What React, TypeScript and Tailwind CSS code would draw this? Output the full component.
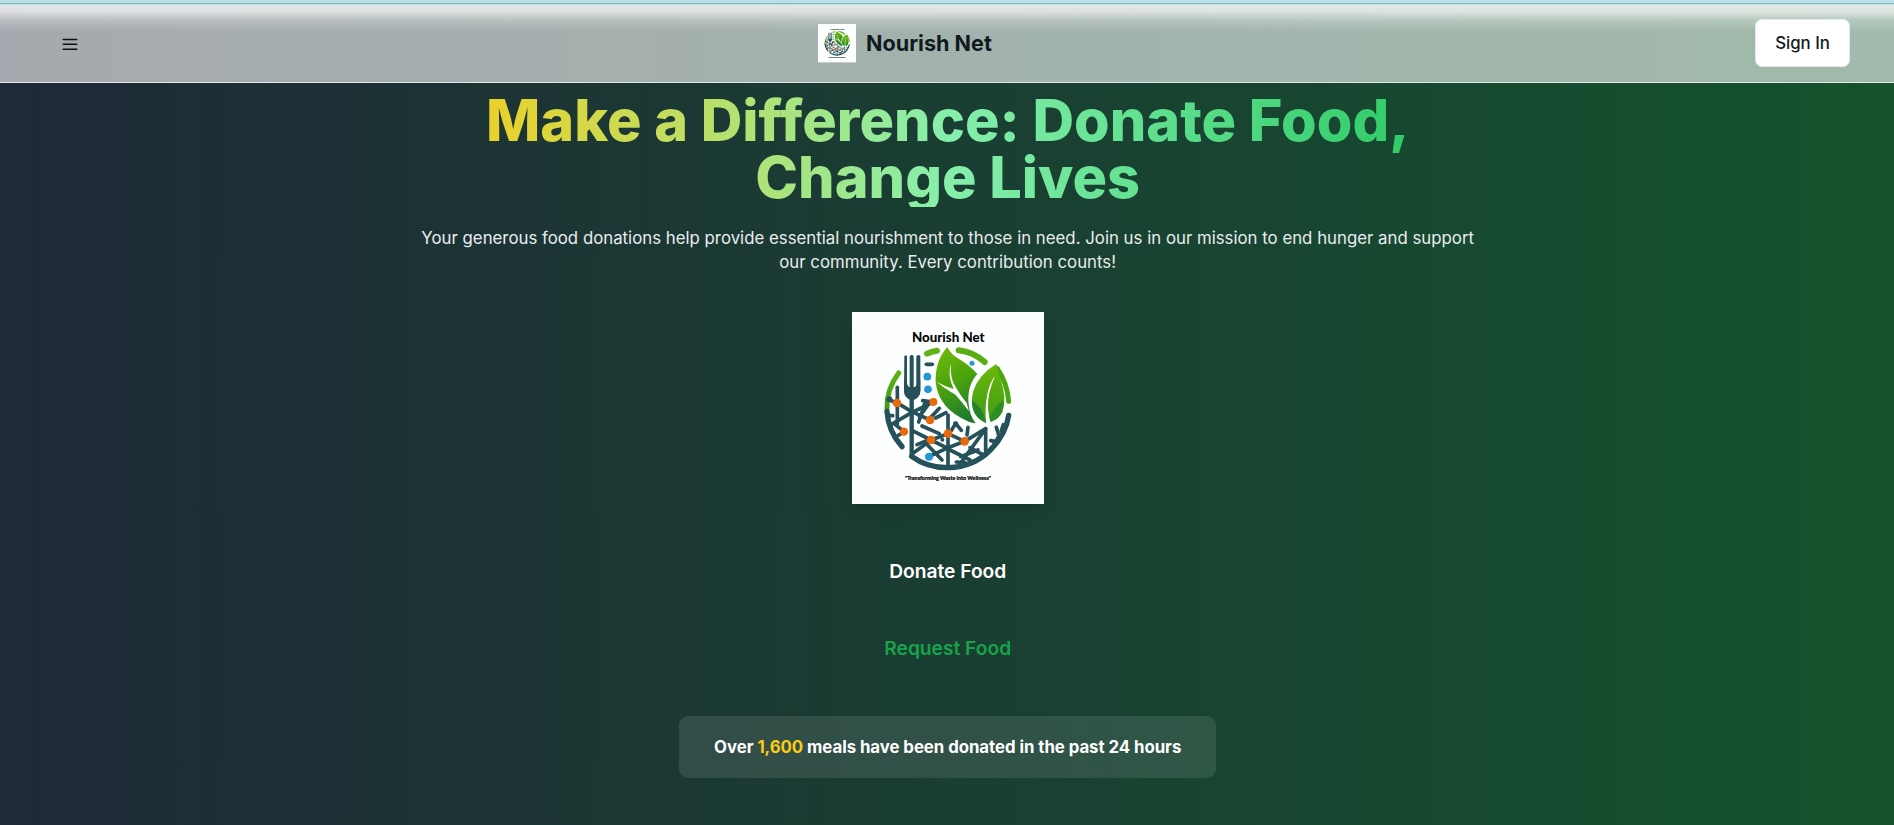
import React from "react";

function Logo({ className }: { className: string }) {
  return (
    <svg viewBox="36 36 576 576" className={className} role="img" aria-label="Nourish Net">
      <defs>
        <linearGradient id="leafA" x1="0.3" y1="0" x2="0.6" y2="1">
          <stop offset="0" stopColor="#6cb90a" />
          <stop offset="0.45" stopColor="#4ba40c" />
          <stop offset="1" stopColor="#1d7a2f" />
        </linearGradient>
        <linearGradient id="leafB" x1="0.5" y1="0" x2="0.5" y2="1">
          <stop offset="0" stopColor="#6cb80a" />
          <stop offset="1" stopColor="#3d9b14" />
        </linearGradient>
        <linearGradient id="arcL" x1="0" y1="0" x2="0" y2="1">
          <stop offset="0" stopColor="#5cb30e" />
          <stop offset="1" stopColor="#3f9a1d" />
        </linearGradient>
      </defs>
      <rect x="36" y="36" width="576" height="576" fill="#fdfefe" />
      <text x="325" y="125" textAnchor="middle" textLength="218" lengthAdjust="spacingAndGlyphs" fill="#050505" className="font-['Lato',sans-serif] text-[39px] font-black">
        Nourish Net
      </text>
      <text x="324" y="539" textAnchor="middle" textLength="258" lengthAdjust="spacingAndGlyphs" fill="#050505" stroke="#050505" strokeWidth="0.6" className="font-['Lato',sans-serif] text-[16px] font-black">
        "Transforming Waste into Wellness"
      </text>

      <g fill="none" strokeLinecap="round" strokeWidth="15">
        <path d="M176 219Q139 268 141 326" stroke="url(#arcL)" />
        <path d="M261 161Q275 154 291 152" stroke="#5fb414" strokeWidth="18" />
        <path d="M356 151Q400 156 434 186" stroke="#57ad12" strokeWidth="18" />
        <path d="M472 206Q502 250 506 304" stroke="#4aa511" />
      </g>

      <g fill="none" stroke="#25525a" strokeLinecap="round" strokeLinejoin="round" strokeWidth="11">
        <path d="M141 334Q145 395 186 440" strokeWidth="16" />
        <path d="M215 469Q262 504 325 503Q402 501 453 448Q498 402 506 346" strokeWidth="16" />
        <path d="M215 290V469" strokeWidth="13" strokeLinecap="butt" />
        <path d="M172 262V371" />
        <path d="M148 300L170 308L215 335L270 360" />
        <path d="M145 347H158" />
        <path d="M153 374L215 338L280 306" />
        <path d="M165 373L192 395L166 412" />
        <path d="M248 302L280 306M256 304L248 330L236 366" />
        <path d="M270 355L298 325M287 354L318 338M262 318L238 350" />
        <path d="M246 378L298 401" />
        <path d="M324 345V500" />
        <path d="M217 392L273 420L325 446" />
        <path d="M219 460L273 420L324 401" />
        <path d="M231 434L265 420M256 428L306 480" />
        <path d="M267 470L324 443L374 424" />
        <path d="M324 401L374 424" />
        <path d="M324 447L390 480" />
        <path d="M347 370L334 392M347 370L364 391" />
        <path d="M384 382L381 405" />
        <path d="M374 424L437 386V458" />
        <path d="M437 386L362 489" />
        <path d="M349 486L375 488M390 443L434 467M362 470L414 450" />
        <path d="M469 382L477 408M477 408L462 432M452 422L470 425M490 374L484 392" />
        <path d="M259 193H277" />
      </g>

      <path d="M193 169Q197 163 201 169V252Q201 262 209 262V169Q216 161 221 169V262Q229 262 229 252V169Q236 161 241 169V272Q241 290 222 300H210Q192 290 192 272Z" fill="#25525a" />
      <path d="M193 240V274Q194 297 216 299Q240 296 241 273V240L230 255Q228 264 216 264Q205 264 203 255Z" fill="#25525a" />

      <path d="M322 141Q285 181 287 247Q296 328 386 365Q396 369 407 370Q389 347 386 313Q380 258 412 222Q388 195 357 177Q332 163 322 141Z" fill="url(#leafA)" />
      <path d="M469 191Q415 226 401 270Q381 333 437 369Q473 364 487 337Q502 296 481 235Q473 214 469 191Z" fill="url(#leafB)" />
      <path d="M396 302Q426 317 438 369Q394 350 396 302Z" fill="#22852c" />
      <path d="M490 302Q459 316 446 367Q492 357 490 302Z" fill="#2d8d25" />
      <path d="M333 191Q329 232 347 262Q361 286 380 309L387 334Q366 306 345 283Q320 269 289 245Q315 259 341 267Q321 224 333 191Z" fill="#fdfefe" />
      <path d="M465 228Q442 280 444 323Q446 353 454 375H439Q433 326 442 283Q449 247 465 228Z" fill="#fdfefe" />

      <g fill="#2196d8">
        <circle cx="262" cy="230" r="11.5" />
        <circle cx="264" cy="268" r="11.5" />
        <circle cx="396" cy="190" r="7.5" />
        <circle cx="267" cy="470" r="12" />
      </g>
      <g fill="#25525a">
        <circle cx="148" cy="298" r="9" />
        <circle cx="307" cy="419" r="6" />
        <circle cx="347" cy="372" r="8" />
      </g>
      <g fill="#e8690b">
        <circle cx="171" cy="309" r="13" />
        <circle cx="280" cy="306" r="12" />
        <circle cx="270" cy="360" r="13" />
        <circle cx="192" cy="395" r="12.5" />
        <circle cx="324" cy="401" r="13" />
        <circle cx="273" cy="420" r="13" />
        <circle cx="374" cy="424" r="13" />
      </g>
    </svg>
  );
}

function MenuIcon() {
  return (
    <svg viewBox="0 0 18 18" className="size-[18px]" fill="none" stroke="#0b1215" strokeWidth="1.4" strokeLinecap="round">
      <path d="M2.2 4.5H15.8M2.2 9.3H15.8M2.2 14.2H15.8" />
    </svg>
  );
}

function Header() {
  return (
    <header className="flex h-[78px] items-center border-b border-[#e2e8e8] bg-[linear-gradient(to_bottom,rgba(255,255,255,0.72)_0px,rgba(255,255,255,0.6)_7px,rgba(255,255,255,0.2)_16px,rgba(255,255,255,0)_27px),linear-gradient(rgba(255,255,255,0.6),rgba(255,255,255,0.6))] pr-11 pl-[60.5px]">
      <div className="flex w-[757.5px] shrink-0">
        <button aria-label="Menu">
          <MenuIcon />
        </button>
      </div>
      <div className="flex items-center gap-[9.6px]">
        <Logo className="size-[38.4px]" />
        <span className="text-[21.6px] font-bold text-[#101a1e]">Nourish Net</span>
      </div>
      <button className="mb-px ml-auto h-12 w-[95px] rounded-[7px] border border-[#e2e8f0] bg-white pt-0.5 text-[16.8px] font-medium text-[#0f1720]">
        Sign In
      </button>
    </header>
  );
}

export default function App() {
  return (
    <div className="flex h-[825px] flex-col overflow-hidden bg-[linear-gradient(to_right,#1f2937,#14532d)] font-['Inter',sans-serif]">
      <div className="h-[5px] shrink-0 bg-[linear-gradient(to_bottom,#b8e0e6_3px,#8ab8bd_3px,#8ab8bd_4px,#b8e0e6_4px)]" />
      <Header />
      <main className="flex flex-col items-center pt-[8.7px] pl-[1.4px] text-center">
        <h1 className="w-[1075px] bg-[linear-gradient(to_right,#facc15,#86efac,#22c55e)] bg-clip-text text-[57.6px] leading-[57.6px] font-extrabold text-transparent">
          Make a Difference: Donate Food,
          <br />
          Change Lives
        </h1>
        <p className="mt-[18.9px] w-[1075px] text-[16.8px] leading-6 tracking-[0.01px] text-[#eaecf0]">
          Your generous food donations help provide essential nourishment to those in need. Join us in our mission to end hunger and support our community. Every contribution counts!
        </p>
        <Logo className="mt-[38.4px] size-48 shadow-lg" />
        <a className="mt-[53px] text-[19.2px] leading-7 font-semibold text-white">Donate Food</a>
        <a className="mt-[49px] text-[19.2px] leading-7 font-semibold text-[#16a34a]">Request Food</a>
        <div className="mt-[54px] flex h-[62px] w-[537px] items-center justify-center rounded-[9.6px] bg-white/10 text-[16.8px] font-bold tracking-[-0.04px] text-white">
          <p>
            Over <span className="text-[#facc15]">1,600</span> meals have been donated in the past 24 hours
          </p>
        </div>
      </main>
    </div>
  );
}
